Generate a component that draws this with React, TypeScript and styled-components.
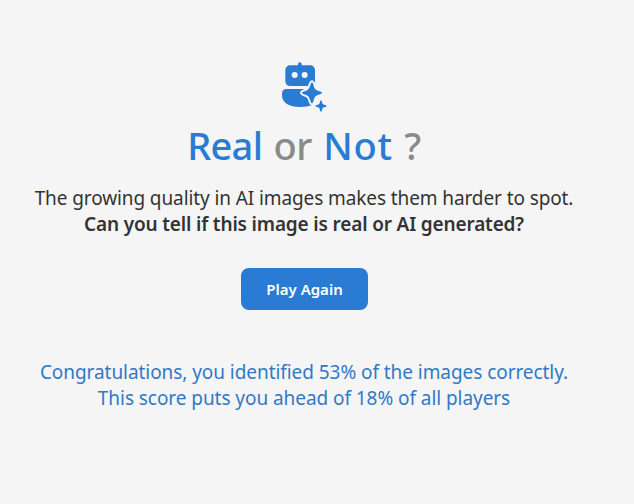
import React from "react";
import styled, { createGlobalStyle } from "styled-components";

const GlobalStyle = createGlobalStyle`
  *, *::before, *::after { box-sizing: border-box; }
  body {
    margin: 0;
    background: #f5f5f5;
    font-family: "Segoe UI", "Noto Sans", "Open Sans", sans-serif;
  }
`;

const Page = styled.main`
  min-height: 504px;
  width: 608px;
  padding-top: 61px;
  display: flex;
  flex-direction: column;
  align-items: center;
  text-align: center;
`;

const Logo = styled.svg`
  display: block;
  width: 48px;
  height: 52px;
  color: #2a7bd3;
`;

const Title = styled.h1`
  margin: 7px 0 0;
  font-size: 38px;
  font-weight: 500;
  line-height: 50px;
  letter-spacing: -0.4px;
  word-spacing: 1.8px;
  color: #8a8a8a;
  white-space: nowrap;
`;

const Accent = styled.span<{ $spacing: number }>`
  color: #2a7bd3;
  letter-spacing: ${(p) => p.$spacing}px;
`;

const Copy = styled.div<{ $tone: string; $top: number }>`
  margin-top: ${(p) => p.$top}px;
  color: ${(p) => p.$tone};
`;

const Line = styled.p<{ $bold?: boolean; $spacing: number }>`
  margin: 0;
  font-size: 19px;
  line-height: 26px;
  font-weight: ${(p) => (p.$bold ? 600 : 400)};
  letter-spacing: ${(p) => p.$spacing}px;
  white-space: nowrap;
`;

const PlayButton = styled.button`
  margin: 31px 0 0 1px;
  width: 127px;
  height: 42px;
  padding: 0;
  border: 0;
  border-radius: 8px;
  background: #2a7bd3;
  color: #fff;
  font-family: inherit;
  font-size: 15px;
  font-weight: 600;
  line-height: 42px;
  letter-spacing: 0;
  white-space: nowrap;
`;

const RobotLogo = () => (
  <Logo viewBox="30 18 144 156" fill="currentColor" aria-hidden="true">
    <path d="M84 40V27a5.500 5.500 0 0 1 11 0v13z" />
    <rect x="46" y="31" width="89" height="62" rx="14" />
    <path d="M50 102H130V149Q112 156 89 156C58 156 36 144 36 121V116Q36 102 50 102Z" />
    <circle cx="74" cy="60" r="9" fill="#f5f5f5" />
    <circle cx="104" cy="60" r="9" fill="#f5f5f5" />
    <path
      d="M126 82C129 82 130 89 132 96Q135 105 143 107C151 109 156 111 156 113.500S150 118 143 120Q135 122 132 131C130 139 129 145 126 145S122 139 119 131Q116 122 109 120C101 118 96 116 96 113.500S101 109 109 107Q116 105 119 96C122 89 123 82 126 82Z"
      stroke="#f5f5f5"
      strokeWidth="12"
      strokeLinejoin="round"
      paintOrder="stroke"
    />
    <path d="M153 136C155 136 156 141 157 145Q158 148 162 149C167 150 170 151 170 153S167 156 162 157Q158 158 157 162C156 167 155 170 153 170S150 167 149 162Q148 158 144 157C139 156 136 155 136 153S139 150 144 149Q148 148 149 145C150 141 151 136 153 136Z" />
  </Logo>
);

export default function App() {
  return (
    <>
      <GlobalStyle />
      <Page>
        <RobotLogo />
        <Title>
          <Accent $spacing={-0.7}>Real</Accent> or <Accent $spacing={0.8}>Not</Accent> ?
        </Title>
        <Copy $tone="#333333" $top={15}>
          <Line $spacing={-0.1}>The growing quality in AI images makes them harder to spot.</Line>
          <Line $bold $spacing={-0.16}>Can you tell if this image is real or AI generated?</Line>
        </Copy>
        <PlayButton type="button">Play Again</PlayButton>
        <Copy $tone="#3079c6" $top={49}>
          <Line $spacing={-0.06}>Congratulations, you identified 53% of the images correctly.</Line>
          <Line $spacing={-0.06}>This score puts you ahead of 18% of all players</Line>
        </Copy>
      </Page>
    </>
  );
}
